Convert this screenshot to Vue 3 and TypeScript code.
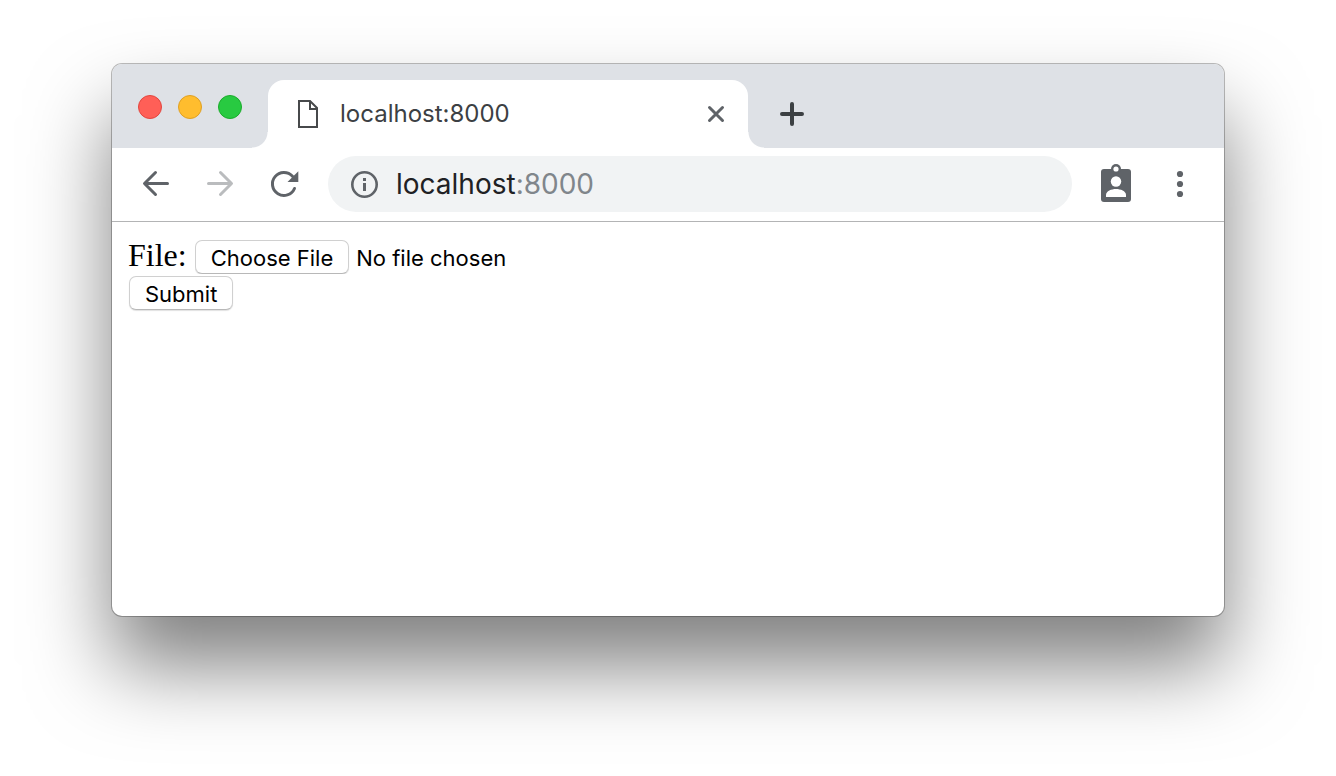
<script setup lang="ts">
import { ref } from 'vue'

const host = 'localhost'
const port = ':8000'
const lights = ['close', 'minimize', 'zoom']
const fileName = ref('')

function onPick(event: Event) {
  const input = event.target as HTMLInputElement
  fileName.value = input.files?.[0]?.name ?? ''
}
</script>

<template>
  <div class="desktop">
    <main class="window">
      <header class="tabstrip">
        <div class="lights">
          <button v-for="light in lights" :key="light" type="button" :class="['light', light]" :aria-label="light"></button>
        </div>
        <div class="tab">
          <svg width="24" height="32" viewBox="0 0 24 32" fill="none" stroke="#47494b" stroke-width="2" aria-hidden="true">
            <path d="M3 3H14L21 10V29H3Z" />
            <path d="M14 3V11H21" />
          </svg>
          <span class="tab-title">{{ host }}{{ port }}</span>
          <button type="button" class="icon-button" aria-label="Close tab">
            <svg width="24" height="24" viewBox="0 0 24 24" stroke="#5f6368" stroke-width="3" stroke-linecap="round">
              <path d="M5.500 5.500L18.500 18.500M18.500 5.500L5.500 18.500" />
            </svg>
          </button>
        </div>
        <button type="button" class="icon-button new-tab" aria-label="New tab">
          <svg width="32" height="32" viewBox="0 0 32 32" stroke="#3c4043" stroke-width="4" stroke-linecap="round">
            <path d="M16 6V26M6 16H26" />
          </svg>
        </button>
      </header>

      <nav class="toolbar">
        <button type="button" class="icon-button" aria-label="Back">
          <svg width="32" height="32" viewBox="0 0 32 32" fill="none" stroke="#5f6368" stroke-width="3" stroke-linecap="round" stroke-linejoin="round">
            <path d="M27.500 15.500H5M15.500 4.500L4.500 15.500L15.500 26.500" />
          </svg>
        </button>
        <button type="button" class="icon-button" aria-label="Forward" disabled>
          <svg width="32" height="32" viewBox="0 0 32 32" fill="none" stroke="#babcbe" stroke-width="3" stroke-linecap="round" stroke-linejoin="round">
            <path d="M4.500 15.500H27M16.500 4.500L27.500 15.500L16.500 26.500" />
          </svg>
        </button>
        <button type="button" class="icon-button" aria-label="Reload">
          <svg width="32" height="32" viewBox="0 0 32 32" fill="none">
            <path d="M24.500 8.300A11.500 11.500 0 1 0 26.500 20.500" stroke="#5f6368" stroke-width="3" stroke-linecap="round" />
            <path d="M30.300 3.300V14H19.500Z" fill="#5f6368" />
          </svg>
        </button>
        <div class="address">
          <svg width="28" height="28" viewBox="0 0 28 28" fill="none" aria-hidden="true">
            <circle cx="14.500" cy="14.500" r="12.200" stroke="#5f6368" stroke-width="2.600" />
            <path d="M13 8H16V11H13ZM13 13H16V21H13Z" fill="#5f6368" />
          </svg>
          <a class="url" href="#">{{ host }}<span class="port">{{ port }}</span></a>
        </div>
        <button type="button" class="icon-button" aria-label="Profile">
          <svg width="32" height="40" viewBox="0 0 32 40">
            <rect x="1" y="5" width="30" height="33" rx="3" fill="#5f6368" />
            <circle cx="16" cy="5" r="5" fill="#5f6368" />
            <circle cx="16" cy="5" r="2.600" fill="#fff" />
            <circle cx="16" cy="17.500" r="5.200" fill="#fff" />
            <path d="M6 33V31C6 27 11.500 25 16 25S26 27 26 31V33Z" fill="#fff" />
          </svg>
        </button>
        <button type="button" class="icon-button" aria-label="Menu">
          <svg width="32" height="32" viewBox="0 0 32 32" fill="#5f6368">
            <circle cx="16" cy="6" r="3.100" />
            <circle cx="16" cy="16" r="3.100" />
            <circle cx="16" cy="26" r="3.100" />
          </svg>
        </button>
      </nav>

      <form class="page" @submit.prevent>
        <div class="row">
          <label for="file">File:</label>
          <input id="file" type="file" :title="fileName" @change="onPick" />
        </div>
        <button type="submit" class="submit">Submit</button>
      </form>
    </main>
  </div>
</template>

<style>
body {
  margin: 0;
  background: #fff;
}
</style>

<style scoped>
.desktop {
  box-sizing: border-box;
  display: flex;
  min-height: 100vh;
  padding: 64px 112px 160px;
  overflow: hidden;
  font-family: Inter, "Liberation Sans", sans-serif;
}

.window {
  flex: 1;
  display: flex;
  flex-direction: column;
  min-width: 0;
  overflow: hidden;
  border-radius: 10px;
  background: #fff;
  box-shadow: 0 0 0 1px rgba(0, 0, 0, 0.26), 0 50px 82px rgba(0, 0, 0, 0.5);
}

button {
  font-family: inherit;
  cursor: pointer;
}

.tabstrip {
  display: flex;
  height: 84px;
  background: #dee1e6;
}

.lights {
  display: flex;
  gap: 16px;
  box-sizing: border-box;
  width: 156px;
  padding: 31px 26px 0;
}

.light {
  box-sizing: border-box;
  width: 24px;
  height: 24px;
  padding: 0;
  border: 1px solid;
  border-radius: 50%;
}

.close {
  background: #ff5f57;
  border-color: #e2463f;
}

.minimize {
  background: #ffbd2e;
  border-color: #dfa023;
}

.zoom {
  background: #28ca41;
  border-color: #1bac2c;
}

.tab {
  position: relative;
  display: flex;
  align-items: center;
  box-sizing: border-box;
  width: 480px;
  height: 68px;
  margin-top: 16px;
  padding: 0 20px 0 28px;
  border-radius: 16px 16px 0 0;
  background: #fff;
}

/* Concave feet that join the active tab to the toolbar. */
.tab::before,
.tab::after {
  content: "";
  position: absolute;
  bottom: 0;
  width: 16px;
  height: 16px;
}

.tab::before {
  right: 100%;
  background: radial-gradient(circle at 0 0, #dee1e6 15px, #fff 16px);
}

.tab::after {
  left: 100%;
  background: radial-gradient(circle at 100% 0, #dee1e6 15px, #fff 16px);
}

.tab-title {
  flex: 1;
  margin-left: 20px;
  padding-bottom: 2px;
  color: #3c4043;
  font-size: 24px;
}

.icon-button {
  display: flex;
  flex: none;
  padding: 0;
  border: 0;
  background: none;
}

.new-tab {
  align-self: flex-start;
  margin: 34px 0 0 28px;
}

.toolbar {
  display: flex;
  align-items: center;
  gap: 32px;
  box-sizing: border-box;
  height: 74px;
  padding: 0 28px 1px;
  border-bottom: 1px solid #b3b4b5;
}

.address {
  flex: 1;
  display: flex;
  align-items: center;
  gap: 18px;
  box-sizing: border-box;
  height: 56px;
  margin: 0 -4px;
  padding: 0 22px;
  border-radius: 28px;
  background: #f1f3f4;
}

.url {
  color: #202124;
  font-size: 28px;
  text-decoration: none;
}

.port {
  color: #80868b;
}

.page {
  padding: 16px;
  color: #000;
}

.row {
  display: flex;
  align-items: flex-start;
  gap: 8px;
  height: 36px;
}

.row label {
  font-family: "Liberation Serif", serif;
  font-size: 32px;
  line-height: 34px;
}

input[type="file"] {
  width: 480px;
  padding-top: 2px;
  color: #000;
  font-family: inherit;
  font-size: 22px;
}

input[type="file"]::file-selector-button,
.submit {
  box-sizing: border-box;
  height: 34px;
  margin: 0;
  padding: 1px 15px 0;
  border: 1px solid #d0d0d0;
  border-bottom-color: #b8b8b8;
  border-radius: 7px;
  background: #fff;
  box-shadow: 0 1px 1px rgba(0, 0, 0, 0.12);
  color: #000;
  font-family: inherit;
  font-size: 22px;
  line-height: 32px;
}

input[type="file"]::file-selector-button {
  margin-right: 7px;
}

.submit {
  display: block;
  margin: 2px 1px;
}
</style>
